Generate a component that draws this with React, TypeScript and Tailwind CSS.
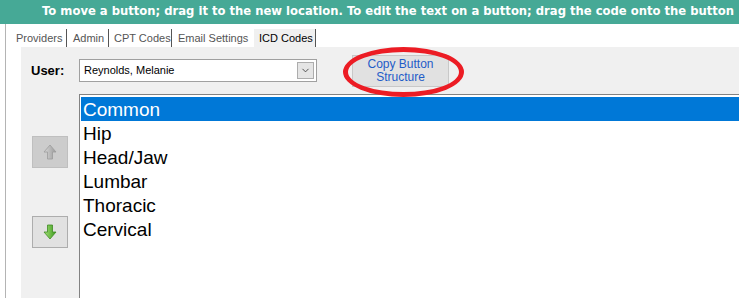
import { ChevronDown } from "lucide-react";

const items = ["Common", "Hip", "Head/Jaw", "Lumbar", "Thoracic", "Cervical"];

const ArrowUp = ({ on }: { on: boolean }) => (
  <svg width="14" height="16" viewBox="0 0 14 16">
    <defs>
      <linearGradient id={on ? "gu1" : "gu0"} x1="0" x2="1" y1="0" y2="0">
        <stop offset="0" stopColor={on ? "#a6e07a" : "#d8d8d8"} />
        <stop offset="1" stopColor={on ? "#3c9a1c" : "#9a9a9a"} />
      </linearGradient>
    </defs>
    <path
      d="M7 1 L13 8 L9.5 8 L9.5 15 L4.5 15 L4.5 8 L1 8 Z"
      fill={`url(#${on ? "gu1" : "gu0"})`}
      stroke={on ? "#3f8a25" : "#9c9c9c"}
      strokeWidth="0.8"
    />
  </svg>
);

const ArrowDown = () => (
  <svg width="14" height="16" viewBox="0 0 14 16">
    <defs>
      <linearGradient id="gd" x1="0" x2="1" y1="0" y2="0">
        <stop offset="0" stopColor="#a6e07a" />
        <stop offset="1" stopColor="#3a9a1a" />
      </linearGradient>
    </defs>
    <path
      d="M7 15 L13 8 L9.5 8 L9.5 1 L4.5 1 L4.5 8 L1 8 Z"
      fill="url(#gd)"
      stroke="#3f8a25"
      strokeWidth="0.8"
    />
  </svg>
);

export default function App() {
  return (
    <div className="relative w-[739px] h-[298px] overflow-hidden bg-white flex flex-col font-['Liberation_Sans',Arial,sans-serif]">
      <div className="h-[24px] shrink-0 bg-[#46a996] pl-[42px] whitespace-nowrap overflow-hidden text-white font-bold text-[11.6px] leading-[23px] font-['DejaVu_Sans',Verdana,sans-serif]">
        To move a button; drag it to the new location. To edit the text on a button; drag the code onto the button
      </div>
      <div className="flex-1 ml-[5px] border-l border-[#b4b4b4] flex flex-col min-h-0">
        <div className="h-[23px] shrink-0 flex items-end pl-[4px] text-[11px] leading-[18px] text-[#555]">
          <span className="h-[18px] w-[57px] pl-[6px] border-r border-[#555]">Providers</span>
          <span className="h-[18px] w-[42px] pl-[6px] border-r border-[#555]">Admin</span>
          <span className="h-[18px] w-[63px] pl-[5px] border-r border-[#555]">CPT Codes</span>
          <span className="h-[18px] w-[82px] pl-[6px]">Email Settings</span>
          <span className="h-[18px] w-[62px] pl-[5px] border-r border-[#555] bg-[#f0f0f0] text-black">ICD Codes</span>
        </div>
        <div className="flex-1 ml-[15px] bg-[#f0f0f0] flex flex-col min-h-0">
          <div className="h-[47px] shrink-0 flex items-center">
            <div className="w-[58px] pl-[10px] font-bold text-[13px] text-black">User:</div>
            <div className="w-[238px] h-[23px] border border-[#a0a0a0] bg-white flex items-center justify-between pl-[4px] pr-[2px]">
              <span className="text-[11px] text-black">Reynolds, Melanie</span>
              <span className="w-[17px] h-[17px] border border-[#adadad] bg-[#e5e5e5] flex items-center justify-center">
                <ChevronDown size={11} strokeWidth={2} color="#444" />
              </span>
            </div>
            <div className="ml-[35px] w-[97px] h-[32px] border border-[#c8c8c8] bg-[#e1e1e1] flex flex-col items-center justify-center text-[12px] leading-[13px] text-[#1f5cc8]">
              <span>Copy Button</span>
              <span>Structure</span>
            </div>
          </div>
          <div className="flex-1 flex min-h-0">
            <div className="w-[58px] shrink-0 pl-[11px] pt-[42px] flex flex-col gap-[48px]">
              <div className="w-[36px] h-[32px] border border-[#bfbfbf] bg-[#cccccc] flex items-center justify-center">
                <ArrowUp on={false} />
              </div>
              <div className="w-[36px] h-[32px] border border-[#adadad] bg-[#e1e1e1] flex items-center justify-center">
                <ArrowDown />
              </div>
            </div>
            <div className="flex-1 bg-white border-l border-t border-[#828282] pl-[1px] pt-[2px]">
              {items.map((t, i) => (
                <div
                  key={t}
                  className={
                    "h-[24px] pl-[2px] text-[19px] leading-[25px] " +
                    (i === 0 ? "bg-[#0078d7] text-white" : "text-black")
                  }
                >
                  {t}
                </div>
              ))}
            </div>
          </div>
        </div>
      </div>
      <div className="absolute left-[343px] top-[47px] w-[121px] h-[50px] rounded-[50%] border-[5px] border-[#ec1c24]" />
    </div>
  );
}
